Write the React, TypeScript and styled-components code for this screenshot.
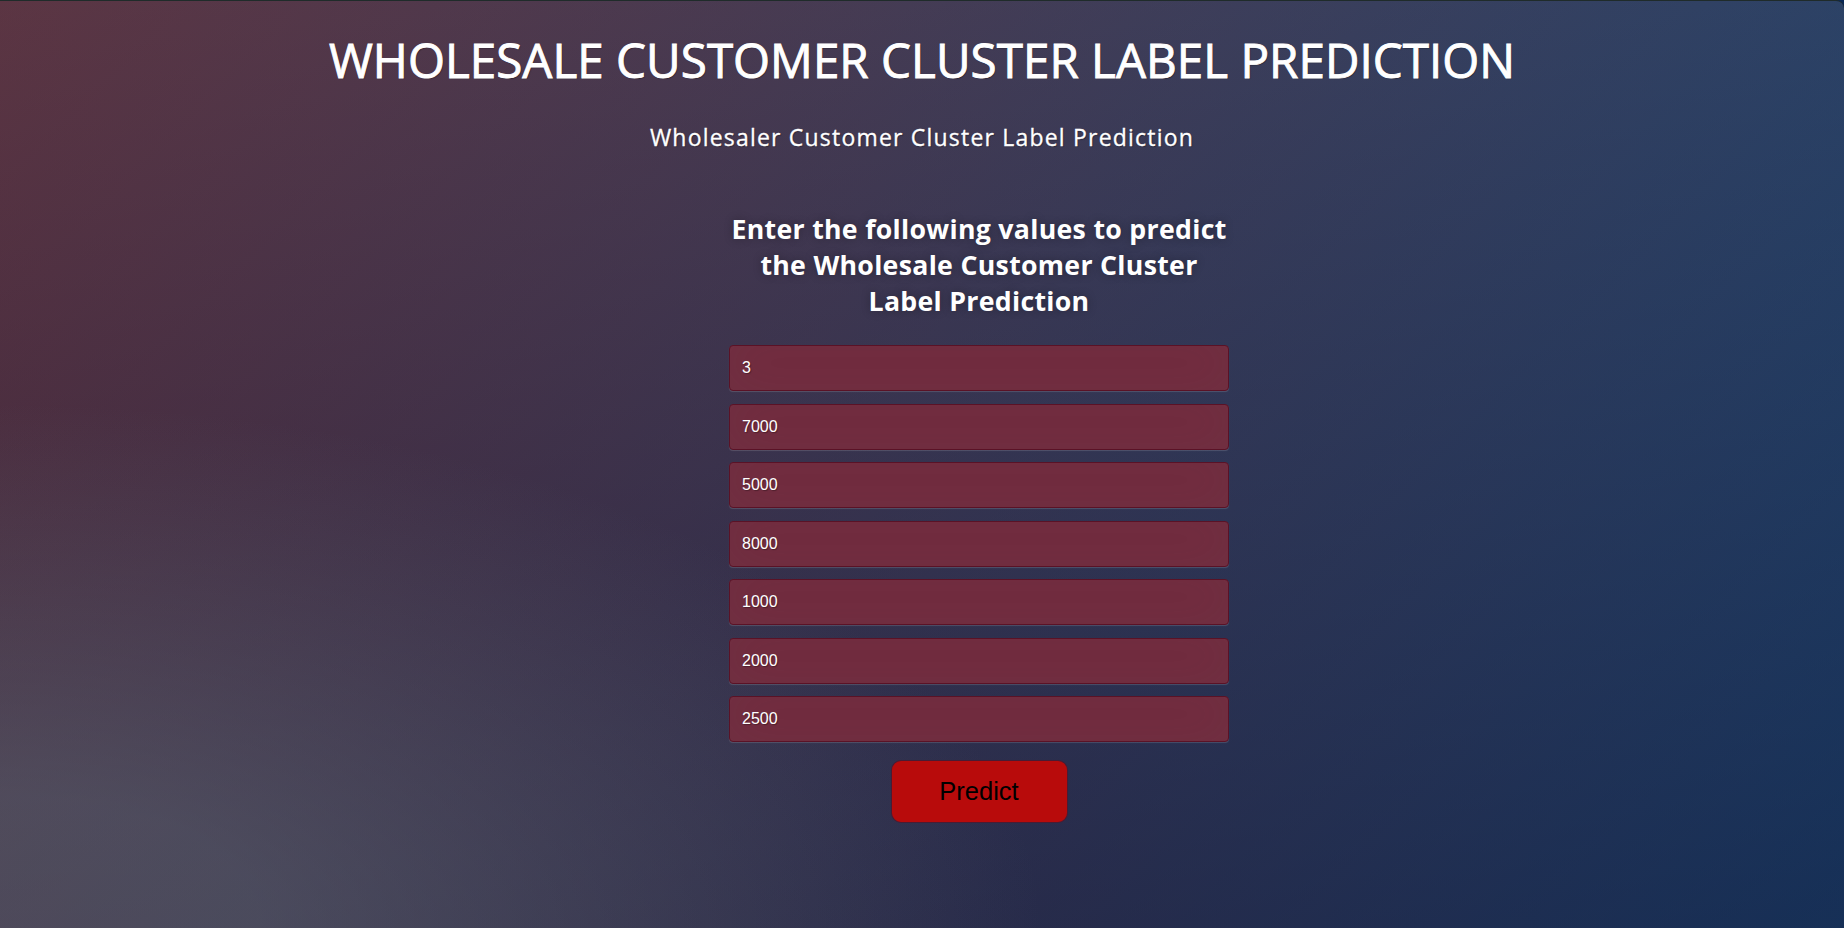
import React from "react";
import styled, { createGlobalStyle } from "styled-components";

const Global = createGlobalStyle`
  html, body, #root { margin: 0; padding: 0; height: 100%; }
  body {
    font-family: "Open Sans", "Noto Sans", sans-serif;
    background: #092756;
  }
  * { box-sizing: border-box; }
`;

const Page = styled.div`
  width: 100%;
  height: 100%;
  min-height: 928px;
  overflow: hidden;
  border-top: 1px solid #1f2b2a;
  border-top-right-radius: 8px;
  background:
    radial-gradient(ellipse farthest-corner at 0% 100%, rgba(104,128,138,0.4) 10%, rgba(138,114,76,0) 40%),
    linear-gradient(to bottom, rgba(57,173,219,0.25) 0%, rgba(42,60,87,0.4) 100%),
    linear-gradient(135deg, #670d10 0%, #092756 100%);
  display: flex;
  flex-direction: column;
  align-items: stretch;
  padding-top: 27px;
`;

const Title = styled.h1`
  margin: 0;
  text-align: center;
  color: #fff;
  font-size: 47.6px;
  font-weight: 400;
  line-height: 64px;
  -webkit-text-stroke: 0.9px #fff;
  text-shadow: 1px 1px 1px rgba(0,0,0,0.35);
  white-space: nowrap;
`;

const Subtitle = styled.p`
  margin: 30px 0 0;
  text-align: center;
  color: #fff;
  font-size: 23px;
  line-height: 31px;
  letter-spacing: 1.2px;
  -webkit-text-stroke: 0.3px #fff;
  text-shadow: 1px 1px 1px rgba(0,0,0,0.3);
`;

const Form = styled.form`
  align-self: center;
  width: 500px;
  margin: 58px 0 0 114px;
  display: flex;
  flex-direction: column;
  align-items: stretch;
`;

const Heading = styled.h2`
  margin: 0 0 26px;
  text-align: center;
  color: #fff;
  font-size: 26.7px;
  font-weight: 700;
  line-height: 36px;
  letter-spacing: 0.3px;
  text-shadow: 0 0 10px rgba(0,0,0,0.3);
`;

const Fields = styled.div`
  display: flex;
  flex-direction: column;
  gap: 12.5px;
`;

const Field = styled.input`
  width: 100%;
  height: 46px;
  padding: 0 12px;
  font-family: "Liberation Sans", Arial, sans-serif;
  font-size: 16px;
  color: #fff;
  background: #722a3e;
  border: 1px solid #5a1226;
  border-radius: 4px;
  outline: none;
  text-shadow: 1px 1px 1px rgba(0,0,0,0.3);
  box-shadow: inset 0 -5px 45px rgba(100,100,100,0.12), 0 1px 1px rgba(255,255,255,0.15);
`;

const ButtonRow = styled.div`
  display: flex;
  justify-content: center;
  margin-top: 18px;
`;

const PredictButton = styled.button`
  width: 177px;
  height: 63px;
  background: #b80b0b;
  color: #000;
  font-family: "Liberation Sans", Arial, sans-serif;
  font-size: 25.5px;
  border: 1px solid rgba(25, 35, 70, 0.7);
  border-radius: 10px;
  cursor: pointer;
`;

const values = ["3", "7000", "5000", "8000", "1000", "2000", "2500"];

export default function App() {
  return (
    <>
      <Global />
      <Page>
        <Title>WHOLESALE CUSTOMER CLUSTER LABEL PREDICTION</Title>
        <Subtitle>Wholesaler Customer Cluster Label Prediction</Subtitle>
        <Form onSubmit={(e) => e.preventDefault()}>
          <Heading>
            Enter the following values to predict the Wholesale Customer Cluster Label Prediction
          </Heading>
          <Fields>
            {values.map((v, i) => (
              <Field key={i} type="text" defaultValue={v} />
            ))}
          </Fields>
          <ButtonRow>
            <PredictButton type="submit">Predict</PredictButton>
          </ButtonRow>
        </Form>
      </Page>
    </>
  );
}
